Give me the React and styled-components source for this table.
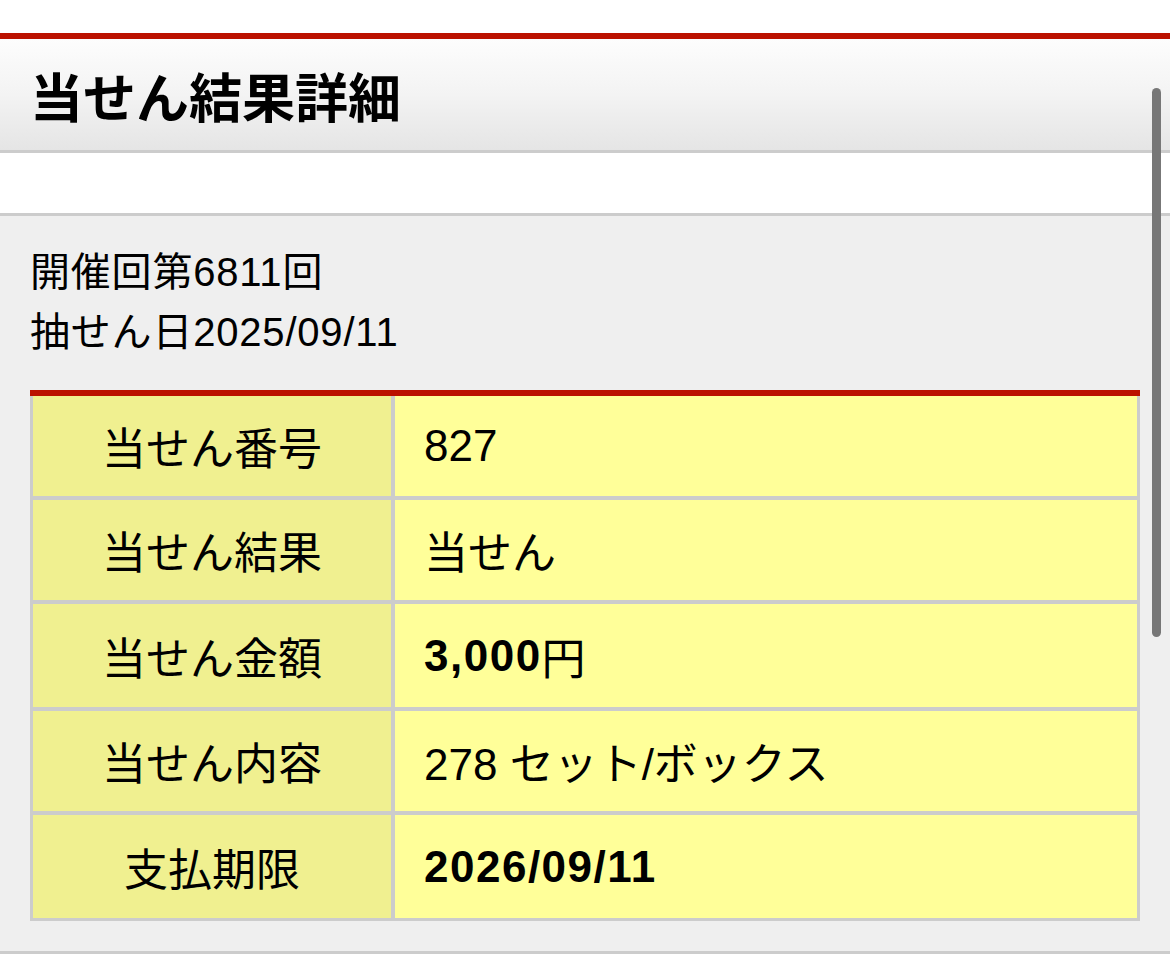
import React from "react";
import styled, { createGlobalStyle } from "styled-components";

const GlobalStyle = createGlobalStyle`
  html, body {
    margin: 0;
    padding: 0;
    background: #ffffff;
  }
  body {
    font-family: "Liberation Sans", "Noto Sans CJK JP", sans-serif;
    color: #000;
  }
`;

const rows = [
  { label: "当せん番号", value: "827" },
  { label: "当せん結果", value: "当せん" },
  { label: "当せん金額", value: "3,000", unit: "円", bold: true },
  { label: "当せん内容", value: "278 セット/ボックス" },
  { label: "支払期限", value: "2026/09/11", bold: true },
];

export default function App() {
  return (
    <Page>
      <GlobalStyle />
      <TopGap />
      <Header>
        <Title>当せん結果詳細</Title>
      </Header>
      <Blank />
      <Section>
        <Info>
          <div>開催回第6811回</div>
          <div>抽せん日2025/09/11</div>
        </Info>
        <ResultTable>
          {rows.map((row) => (
            <React.Fragment key={row.label}>
              <LabelCell tall={row.bold}>{row.label}</LabelCell>
              <ValueCell tall={row.bold}>
                {row.bold ? <strong>{row.value}</strong> : row.value}
                {row.unit}
              </ValueCell>
            </React.Fragment>
          ))}
        </ResultTable>
      </Section>
      <ScrollThumb />
    </Page>
  );
}

const Page = styled.div`
  position: relative;
  width: 1170px;
`;

const TopGap = styled.div`
  height: 33px;
  background: #ffffff;
`;

const Header = styled.header`
  height: 111px;
  display: flex;
  align-items: center;
  padding-left: 30px;
  border-top: 6px solid #bb1100;
  border-bottom: 3px solid #cccccc;
  background: linear-gradient(to bottom, #fdfdfd 0%, #f3f3f3 50%, #e5e5e5 100%);
`;

const Title = styled.h1`
  margin: 0;
  font-size: 53px;
  font-weight: 700;
`;

const Blank = styled.div`
  height: 60px;
  background: #ffffff;
  border-bottom: 3px solid #cccccc;
`;

const Section = styled.section`
  background: #efefef;
  padding: 26px 30px 30px;
  border-bottom: 3px solid #cccccc;
`;

const Info = styled.div`
  font-size: 40px;
  line-height: 60px;
  letter-spacing: 0.8px;
`;

const ResultTable = styled.div`
  margin-top: 28px;
  display: grid;
  grid-template-columns: 358px 1fr;
  gap: 4px;
  padding: 0 3px 3px;
  background: #cccccc;
  border-top: 6px solid #bb1100;
`;

const Cell = styled.div`
  display: flex;
  align-items: center;
  min-height: ${(p) => (p.tall ? "103px" : "100px")};
  font-size: 44px;
`;

const LabelCell = styled(Cell)`
  justify-content: center;
  background: #f0f090;
`;

const ValueCell = styled(Cell)`
  padding-left: 29px;
  background: #ffff99;

  strong {
    font-weight: 700;
    letter-spacing: 1.5px;
  }
`;

const ScrollThumb = styled.div`
  position: absolute;
  top: 88px;
  left: 1152px;
  width: 9px;
  height: 549px;
  border-radius: 5px;
  background: #777777;
`;
